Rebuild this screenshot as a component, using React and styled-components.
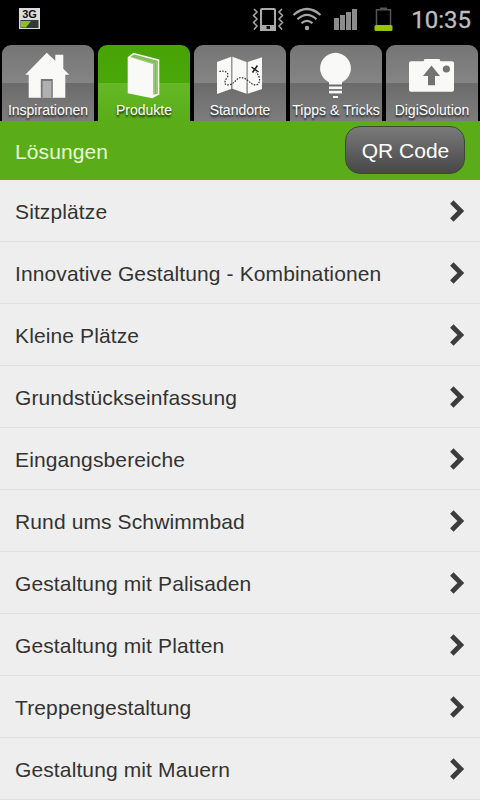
import React from 'react';
import styled, { createGlobalStyle } from 'styled-components';

const GlobalStyle = createGlobalStyle`
  * {
    box-sizing: border-box;
  }
  body {
    margin: 0;
    background-color: #000;
    font-family: "Liberation Sans", Arial, sans-serif;
  }
`;

const Page = styled.div`
  width: 480px;
  height: 800px;
  display: flex;
  flex-direction: column;
  overflow: hidden;
  background-color: #000;
`;

const StatusBar = styled.div`
  height: 45px;
  display: flex;
  align-items: flex-start;
  padding: 7px 9px 0 19px;
`;

const StatusIcons = styled.div`
  display: grid;
  grid-template-columns: 40px 41px 41px 20px;
  margin-left: auto;
`;

const Clock = styled.div`
  width: 77px;
  text-align: right;
  font-family: Roboto, sans-serif;
  font-size: 24px;
  line-height: 26px;
  color: #bebebe;
  -webkit-text-stroke: 0.3px #bebebe;
`;

const TabBar = styled.nav`
  height: 76px;
  display: grid;
  grid-template-columns: repeat(5, 92px);
  gap: 4px;
  padding: 0 2px;
`;

const Tab = styled.button`
  display: flex;
  flex-direction: column;
  align-items: center;
  border: none;
  padding: 0;
  border-radius: 9px 9px 0 0;
  font-family: inherit;
  background: ${({ $active }) => $active
    ? 'linear-gradient(#47a306 0, #4aa70a 38px, #65b927 38px, #59ad18 100%)'
    : 'linear-gradient(#757575 0, #858585 38px, #6b6b6b 38px, #7d7d7d 100%)'};
`;

const TabIcon = styled.svg`
  width: 92px;
  height: 56px;
  flex: none;
`;

const TabLabel = styled.span`
  font-size: 14px;
  line-height: 18px;
  white-space: nowrap;
  color: #fff;
  text-shadow: 0 2px 2px rgba(0, 0, 0, 0.8);
`;

const Header = styled.header`
  height: 59px;
  display: flex;
  justify-content: space-between;
  align-items: flex-start;
  padding: 5px 15px 0;
  background-color: #5aad19;
`;

const Title = styled.h1`
  margin: 0;
  padding-top: 3px;
  font-size: 21px;
  font-weight: normal;
  line-height: 46px;
  letter-spacing: 0.1px;
  color: #e8fbd6;
`;

const QrButton = styled.button`
  width: 120px;
  height: 48px;
  padding: 1px 0 0 1px;
  border: 1.5px solid #3d4a33;
  border-radius: 15px;
  background: linear-gradient(#7a7a7a, #474747);
  font-family: inherit;
  font-size: 21px;
  color: #fff;
`;

const List = styled.ul`
  margin: 0;
  padding: 0;
  list-style: none;
  background-color: #eee;
`;

const Row = styled.li`
  height: 62px;
  display: flex;
  justify-content: space-between;
  align-items: center;
  padding: 3px 15px 0;
  border-bottom: 1px solid #e0e0e0;
  font-size: 21px;
  letter-spacing: 0.12px;
  color: #333;
`;

const Chevron = styled.svg`
  width: 16px;
  height: 24px;
  margin-bottom: 2px;
`;

const NetworkIcon = () => (
  <svg width="21" height="23">
    <rect x="0" y="1" width="21" height="21" fill="#dcdcdc" />
    <text x="10.5" y="11" textAnchor="middle" fontFamily="Liberation Sans, sans-serif" fontSize="11" fontWeight="bold" fill="#111">3G</text>
    <rect x="1.5" y="13" width="18" height="8" fill="#303a38" />
    <path d="M2 14H12L7 20.5H2Z" fill="#8dbf1e" />
  </svg>
);

const VibrateIcon = () => (
  <svg width="32" height="25" fill="none" stroke="#aaa">
    <rect x="9" y="2" width="14" height="21" rx="1" strokeWidth="2" />
    <path d="M8 18H24V24H8Z" fill="#aaa" stroke="none" />
    <rect x="14.5" y="19" width="3.5" height="3" fill="#111" stroke="none" />
    <path d="M2 2L5 5L1.500 8.500L5 12L1.500 15.500L5 19L2 22.500M30 2L27 5L30.500 8.500L27 12L30.500 15.500L27 19L30 22.500" strokeWidth="1.500" />
  </svg>
);

const WifiIcon = () => (
  <svg width="30" height="25" fill="none" stroke="#a5a5a5" strokeWidth="2.200">
    <path d="M1.500 8Q15 -4 28.500 8M5.500 12.300Q15 3.500 24.500 12.300M9.500 16.200Q15 11.500 20.500 16.200" />
    <circle cx="15" cy="21" r="2.200" fill="#a5a5a5" stroke="none" />
  </svg>
);

const SignalIcon = () => (
  <svg width="26" height="25" fill="#8c8c8c">
    <rect x="1" y="11" width="5" height="12" />
    <rect x="7" y="8" width="5" height="15" />
    <rect x="13" y="5" width="5" height="18" />
    <rect x="19" y="2" width="5" height="21" />
  </svg>
);

const BatteryIcon = () => (
  <svg width="20" height="26">
    <path d="M6 0.500H13V3H6Z" fill="#555" />
    <path d="M2.500 18V2.800H16.500V18" fill="none" stroke="#555" strokeWidth="1.500" />
    <rect x="0.500" y="18" width="18" height="6" rx="1.500" fill="#96c40c" />
  </svg>
);

const HouseIcon = () => (
  <TabIcon fill="#f9f9f8">
    <path d="M44.700 7.700L53.300 15.800V9.700H61.300V23.800L67.300 29.800H63.300V52.700H26.700V29.800H23.300Z" />
    <rect x="38.800" y="34" width="12" height="18.700" fill="#777" />
    <rect x="40.600" y="36" width="8.800" height="16.700" fill="#b0b0b0" />
  </TabIcon>
);

const BookIcon = () => (
  <TabIcon fill="#f9f9f8">
    <path d="M29.700 12.300L35.300 7.700L61.300 14.500V49.500L54.300 53.300L29.700 48.300Z" />
    <path d="M32 12L36 9.500L60 15.700V48.700L55 49.800V19.300Z" fill="#9acb74" />
    <path d="M34 11L57.500 17.500V49M36 10L59 16.500" fill="none" stroke="#6fae42" strokeWidth="0.700" />
  </TabIcon>
);

const MapIcon = () => (
  <TabIcon fill="#f9f9f8">
    <path d="M23 17L37.200 11.700V44L23 49ZM38.400 11.700L52.500 17V48.700L38.400 43.700ZM53.700 17L68 12.300V44L53.700 48.700Z" />
    <path d="M25.300 26.500C31 25 35.500 28 33.500 32C29 38 30.500 40.500 36 39.800C41 38 43 32.500 47 32.500C54 33 56 40 62 40C67 39 66.500 31 62 27.500" fill="none" stroke="#333" strokeWidth="1.200" strokeDasharray="1.600 1.200" />
    <path d="M57.500 22L64.500 27M63.500 20.500L58.500 27.500" stroke="#222" strokeWidth="1.500" />
  </TabIcon>
);

const BulbIcon = () => (
  <TabIcon fill="#f9f9f8">
    <path d="M39 39.500V37.200A15.400 15.400 0 1 1 52 37.200V39.500Z" />
    <rect x="39" y="41.500" width="13" height="2.600" />
    <rect x="39" y="45.800" width="13" height="2.600" />
    <rect x="43" y="51" width="5" height="2" />
  </TabIcon>
);

const CameraIcon = () => (
  <TabIcon fill="#f9f9f8">
    <path d="M25 16.300H37.500L38.500 14H53.500L54.500 16.300H66A2 2 0 0 1 68 18.300V44.700A2 2 0 0 1 66 46.700H25A2 2 0 0 1 23 44.700V18.300A2 2 0 0 1 25 16.300Z" />
    <circle cx="60.400" cy="24" r="3.600" fill="#737373" />
    <path d="M45.500 20.500L54 31H49V40.200H42V31H37Z" fill="#737373" />
  </TabIcon>
);

const tabs = [
  { label: 'Inspirationen', Icon: HouseIcon },
  { label: 'Produkte', Icon: BookIcon, active: true },
  { label: 'Standorte', Icon: MapIcon },
  { label: 'Tipps & Tricks', Icon: BulbIcon },
  { label: 'DigiSolution', Icon: CameraIcon },
];

const solutions = [
  'Sitzplätze',
  'Innovative Gestaltung - Kombinationen',
  'Kleine Plätze',
  'Grundstückseinfassung',
  'Eingangsbereiche',
  'Rund ums Schwimmbad',
  'Gestaltung mit Palisaden',
  'Gestaltung mit Platten',
  'Treppengestaltung',
  'Gestaltung mit Mauern',
];

const App = () => (
  <Page>
    <GlobalStyle />
    <StatusBar>
      <NetworkIcon />
      <StatusIcons>
        <VibrateIcon />
        <WifiIcon />
        <SignalIcon />
        <BatteryIcon />
      </StatusIcons>
      <Clock>10:35</Clock>
    </StatusBar>

    <TabBar>
      {tabs.map(({ label, Icon, active }) => (
        <Tab key={label} $active={active}>
          <Icon />
          <TabLabel>{label}</TabLabel>
        </Tab>
      ))}
    </TabBar>

    <Header>
      <Title>Lösungen</Title>
      <QrButton>QR Code</QrButton>
    </Header>

    <List>
      {solutions.map((name) => (
        <Row key={name}>
          {name}
          <Chevron fill="none" stroke="#3c3c3c" strokeWidth="4.800">
            <path d="M2.800 3L11.800 12L2.800 21" />
          </Chevron>
        </Row>
      ))}
    </List>
  </Page>
);

export default App;
